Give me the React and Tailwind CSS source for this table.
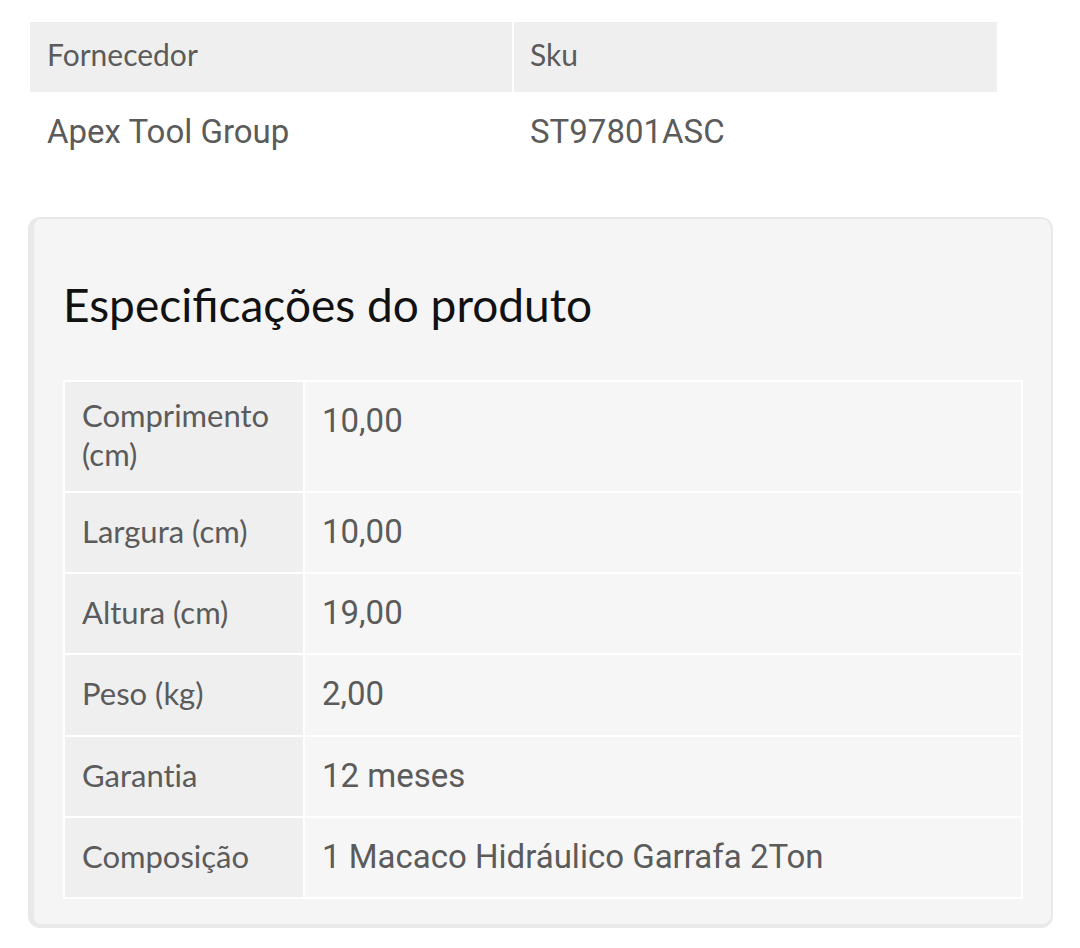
export default function App() {
  const rows = [
    ["Comprimento (cm)", "10,00", "h-[109px]"],
    ["Largura (cm)", "10,00", "h-[81px]"],
    ["Altura (cm)", "19,00", "h-[81px]"],
    ["Peso (kg)", "2,00", "h-[82px]"],
    ["Garantia", "12 meses", "h-[81px]"],
    ["Composição", "1 Macaco Hidráulico Garrafa 2Ton", "h-[81px]"],
  ];
  return (
    <div className="w-[1080px] h-[948px] bg-white overflow-hidden">
      <div className="pt-[22px] pl-[30px]">
        <div className="w-[967px] grid grid-cols-[482px_483px] gap-x-[2px]">
          <div className="h-[70px] bg-[#efefef] flex items-center pb-[6px] pl-[17px] text-[30px] text-[#5b5b5b] font-['Lato',sans-serif]">Fornecedor</div>
          <div className="h-[70px] bg-[#efefef] flex items-center pb-[6px] pl-[16px] text-[30px] text-[#5b5b5b] font-['Lato',sans-serif]">Sku</div>
          <div className="h-[80px] flex items-center pl-[17px] text-[33px] text-[#5b5b5b] font-['Roboto',sans-serif]">Apex Tool Group</div>
          <div className="h-[80px] flex items-center pl-[16px] text-[33px] text-[#5b5b5b] font-['Roboto',sans-serif]">ST97801ASC</div>
        </div>
      </div>
      <div className="ml-[28px] mt-[45px] w-[1025px] h-[711px] rounded-[12px] border-2 border-l-[6px] border-b-[4px] border-[#e9e9e9] bg-[#f5f5f5] pl-[29px] pr-[28px]">
        <h2 className="pt-[58px] text-[46px] leading-[56px] text-[#111] font-['Lato',sans-serif]">Especificações do produto</h2>
        <div className="mt-[47px] border-2 border-white">
          {rows.map(([k, v, h], i) => (
            <div key={i} className={`flex ${h} ${i > 0 ? "border-t-2 border-white" : ""}`}>
              <div className="w-[238px] bg-[#efefef] pl-[17px] pr-[10px] pb-[3px] flex items-center text-[31px] leading-[39px] text-[#5b5b5b] font-['Lato',sans-serif] [font-variant-ligatures:none]">{k}</div>
              <div className="flex-1 border-l-2 border-white bg-[#f6f6f6] pl-[17px] pt-[19px] text-[33px] leading-[39px] text-[#5b5b5b] font-['Roboto',sans-serif]">{v}</div>
            </div>
          ))}
        </div>
      </div>
    </div>
  );
}
